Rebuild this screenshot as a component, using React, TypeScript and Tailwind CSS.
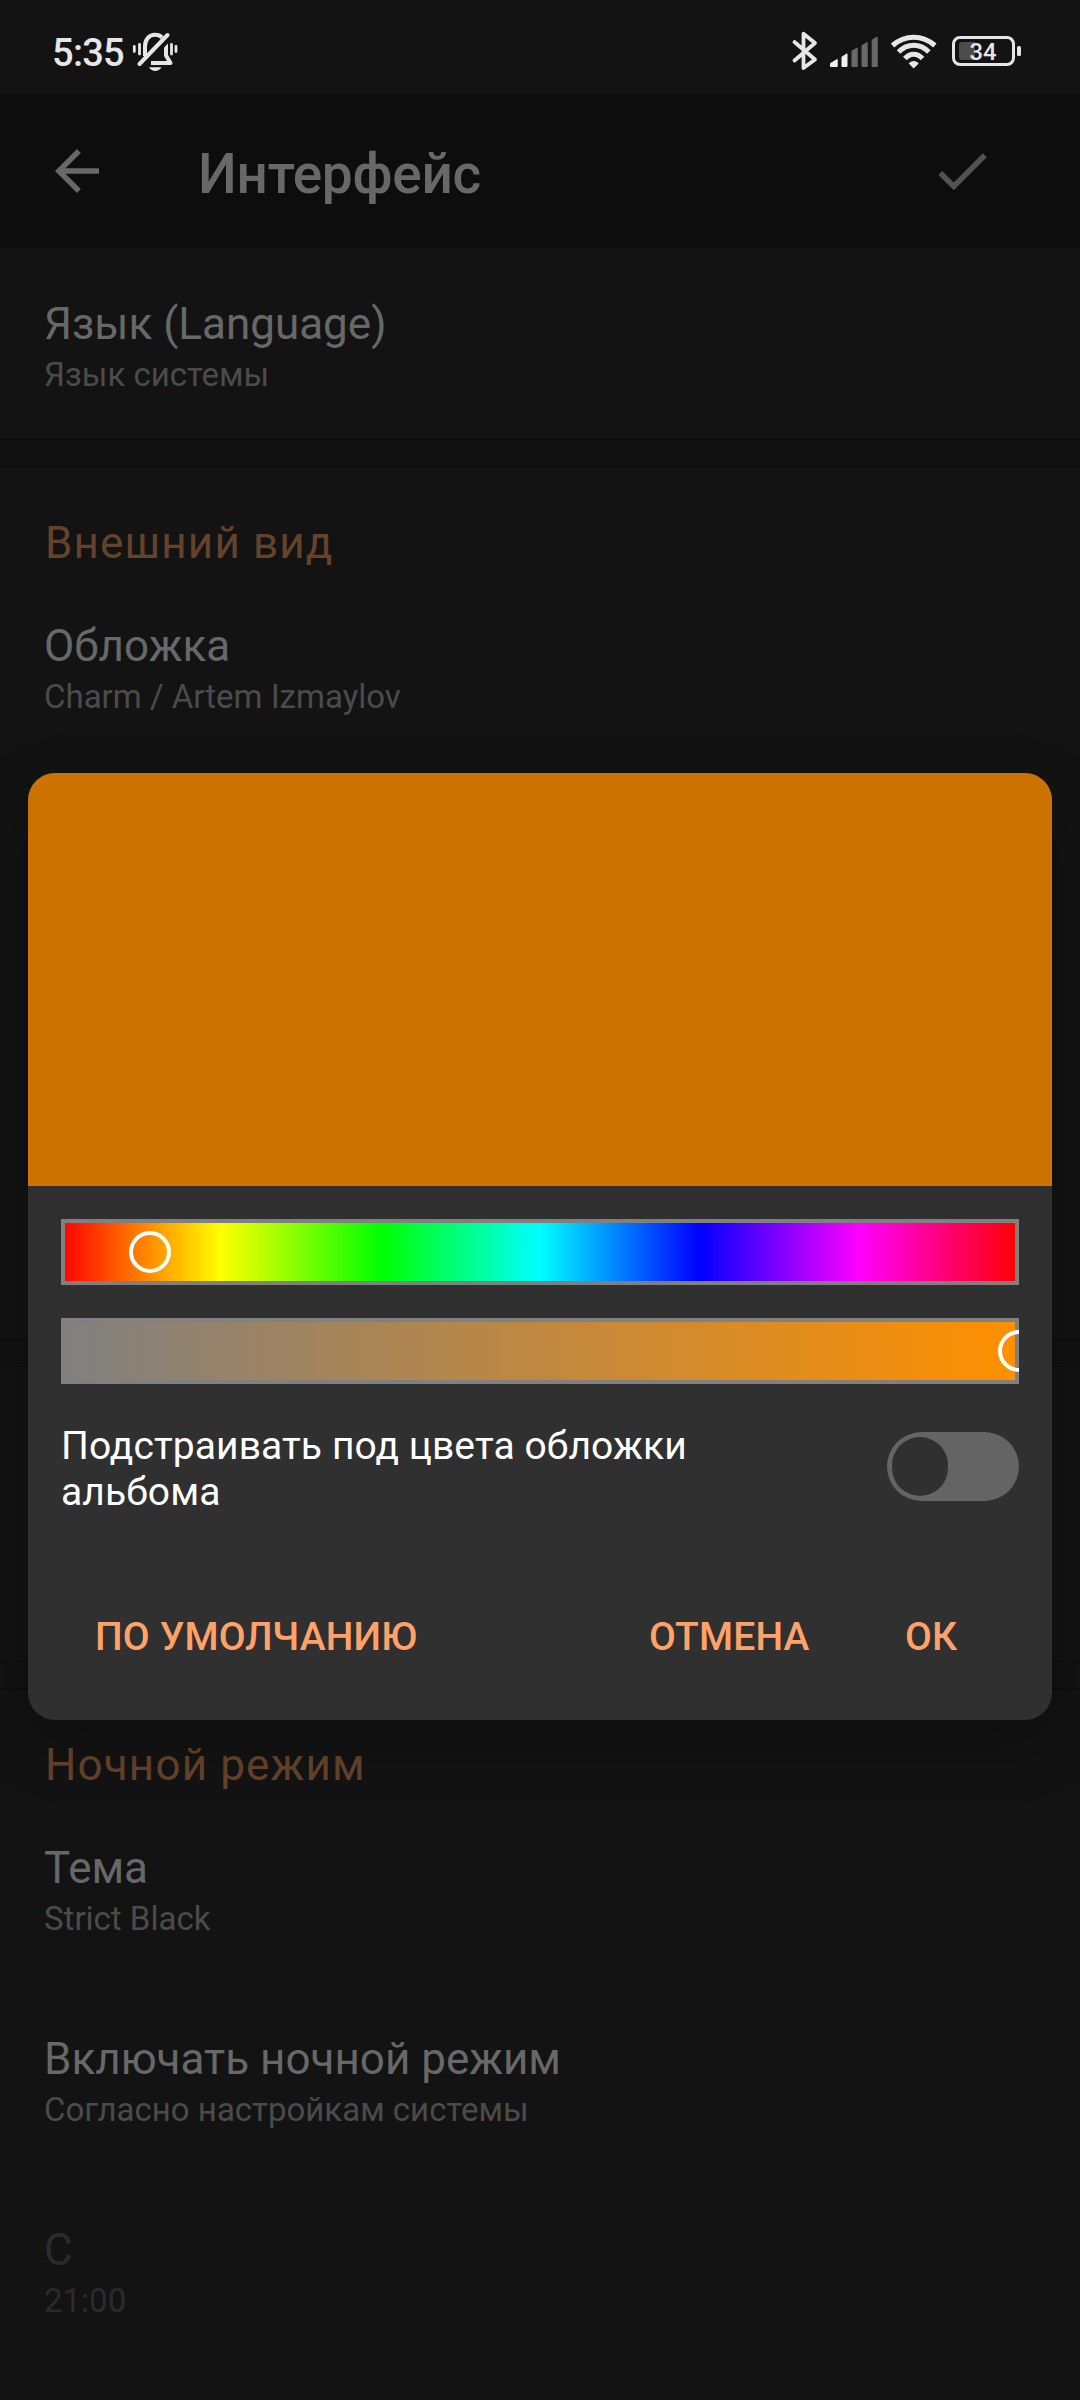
const bg = "bg-[#131313]";

function Row({ title, sub, dim }: { title: string; sub: string; dim?: boolean }) {
  return (
    <div className="flex h-[191px] flex-col pt-[50px] pl-[44px]">
      <div className={dim ? "h-[54px] text-[44px] leading-[52px] text-[#2b2b2b]" : "h-[54px] text-[44px] leading-[52px] text-[#686868]"}>{title}</div>
      <div className={dim ? "h-[45px] text-[33px] leading-[45px] text-[#2b2b2b]" : "h-[45px] text-[33px] leading-[45px] text-[#4b4b4b]"}>{sub}</div>
    </div>
  );
}

function Section({ children }: { children: string }) {
  return <div className="h-[103px] pt-[50px] pl-[45px] text-[44px] leading-[52px] tracking-[1.15px] text-[#65432b]">{children}</div>;
}

function Gap() {
  return <div className="h-[28px] shrink-0 border-y border-[#0c0c0c] bg-[#121212]" />;
}

function BellOff() {
  return (
    <svg className="ml-[8px] h-[40px] w-[46px]" viewBox="132 32 46 40" fill="none" stroke="#e6e6e6">
      <path d="M145 56V46.5C145 39 149.500 34.800 155 34.800C158 34.800 160.500 36 162 37.500M151 63H170.500L166 55.500V50" strokeWidth="4" strokeLinejoin="round" />
      <path d="M168 43.500V55H164V47.500Z" fill="#e6e6e6" stroke="none" />
      <path d="M167.500 35L139.500 64" strokeWidth="4" strokeLinecap="round" />
      <path d="M149 67.300H161.500C160 70 157.500 71 155.200 71C153 71 150.500 70 149 67.300Z" fill="#e6e6e6" stroke="none" />
      <path d="M134.300 46.500V51.500M139.500 44.500V54M171.500 44.500V54M176 46.500V51.500" strokeWidth="2.800" strokeLinecap="round" />
    </svg>
  );
}

function StatusIcons() {
  return (
    <svg className="h-[44px] w-[232px]" viewBox="790 28 232 44" fill="none">
      <path d="M794.500 42L815 59.500L803.500 68V33.700L815 43L794.500 60.500" stroke="#e6e6e6" strokeWidth="3.800" strokeLinejoin="round" strokeLinecap="round" />
      <path d="M830.500 63.500L837.200 59.500V66.500H830.500Z M842 57L847 53.800V66.500H842Z" fill="#f0f0f0" stroke="#f0f0f0" strokeWidth="1" strokeLinejoin="round" />
      <path d="M852 51L857.200 48V66.500H852Z M862 45.500L867.200 42.500V66.500H862Z M872.200 40L877.200 37V66.500H872.200Z" fill="#696969" stroke="#696969" strokeWidth="1" strokeLinejoin="round" />
      <path d="M892.500 45.500C905 34.500 922.400 34.500 934.900 45.500M898.500 52C907.500 43 919.900 43 928.900 52M904.900 58.500C910 52.700 917.400 52.700 922.500 58.500" stroke="#e6e6e6" strokeWidth="5" />
      <path d="M908.700 63.500C911 60 916.500 60 918.700 63.500L913.700 68.500Z" fill="#e6e6e6" />
      <rect x="953.500" y="37.500" width="60" height="27" rx="6.500" stroke="#e6e6e6" strokeWidth="3" />
      <path d="M962 42H975V60H962Q959 60 959 57V45Q959 42 962 42Z" fill="#4c4c4c" />
      <rect x="1017" y="46" width="4" height="10" rx="1.500" fill="#e6e6e6" />
      <text x="969.500" y="60.300" fontSize="24" fontWeight="500" fill="#e6e6e6" textLength="27" lengthAdjust="spacingAndGlyphs">34</text>
    </svg>
  );
}

export default function App() {
  return (
    <div className={"relative h-[2400px] w-[1080px] overflow-hidden font-['Roboto',sans-serif] " + bg}>
      <div className="flex h-[94px] items-start justify-between pl-[52px] pr-[58px]">
        <div className="flex items-start">
          <span className="mt-[30px] text-[38px] leading-[46px] font-medium tracking-[-0.7px] text-[#e6e6e6]">5:35</span>
          <div className="mt-[32px]"><BellOff /></div>
        </div>
        <div className="mt-[28px]"><StatusIcons /></div>
      </div>
      <div className="flex h-[154px] items-start bg-[#0d0d0d] pl-[44px]">
        <svg className="mt-[44px] size-[66px]" viewBox="0 0 24 24" fill="#686868"><path d="M20 11H7.830l5.590-5.590L12 4l-8 8 8 8 1.410-1.410L7.830 13H20v-2z" /></svg>
        <div className="mt-[48px] ml-[88px] grow text-[55px] leading-[65px] font-medium tracking-[-0.3px] text-[#686868]">Интерфейс</div>
        <svg className="mt-[44px] mr-[85px] size-[66px]" viewBox="0 0 24 24" fill="#525252"><path d="M9 16.170L4.830 12l-1.420 1.410L9 19 21 7l-1.410-1.410z" /></svg>
      </div>
      <Row title="Язык (Language)" sub="Язык системы" />
      <Gap />
      <Section>Внешний вид</Section>
      <Row title="Обложка" sub="Charm / Artem Izmaylov" />
      <div className="h-[578px]" />
      <Gap />
      <div className="h-[294px]" />
      <Gap />
      <Section>Ночной режим</Section>
      <Row title="Тема" sub="Strict Black" />
      <Row title="Включать ночной режим" sub="Согласно настройкам системы" />
      <Row title="С" sub="21:00" dim />

      <div className="absolute top-[773px] left-[28px] w-[1024px] rounded-[27px] shadow-[0_22px_60px_rgba(0,0,0,0.25)]">
        <div className="flex h-[947px] flex-col overflow-hidden rounded-[27px] bg-[#303030]">
          <div className="h-[413px] bg-[#cb7200]" />
          <div className="px-[33px] pt-[33px]">
            <div className="relative h-[66px] overflow-hidden bg-[linear-gradient(to_right,#f00,#ff0,#0f0,#0ff,#00f,#f0f,#f00)]">
              <div className="h-full border-4 border-[#808080]" />
              <div className="absolute top-[12px] left-[68px] size-[42px] rounded-full border-4 border-white" />
            </div>
            <div className="relative mt-[33px] h-[66px] overflow-hidden bg-[linear-gradient(to_right,#808080,#ff9000)]">
              <div className="h-full border-4 border-[#808080]" />
              <div className="absolute top-[12px] left-[937px] size-[42px] rounded-full border-4 border-white" />
            </div>
            <div className="mt-[39px] flex items-start justify-between">
              <div className="w-[720px] text-[39px] leading-[46px] tracking-[0.08px] text-white">Подстраивать под цвета обложки<br />альбома</div>
              <div className="mt-[9px] flex h-[69px] w-[132px] items-center rounded-full bg-[#646464] pl-[5px]">
                <div className="h-[59px] w-[56px] rounded-full bg-[#303030]" />
              </div>
            </div>
          </div>
          <div className="mt-[99px] flex text-[39px] leading-[46px] font-medium tracking-[0.15px] text-[#ffa269]">
            <span className="ml-[67px] w-[554px]">ПО УМОЛЧАНИЮ</span>
            <span className="w-[256px]">ОТМЕНА</span>
            <span>ОК</span>
          </div>
        </div>
      </div>
    </div>
  );
}
